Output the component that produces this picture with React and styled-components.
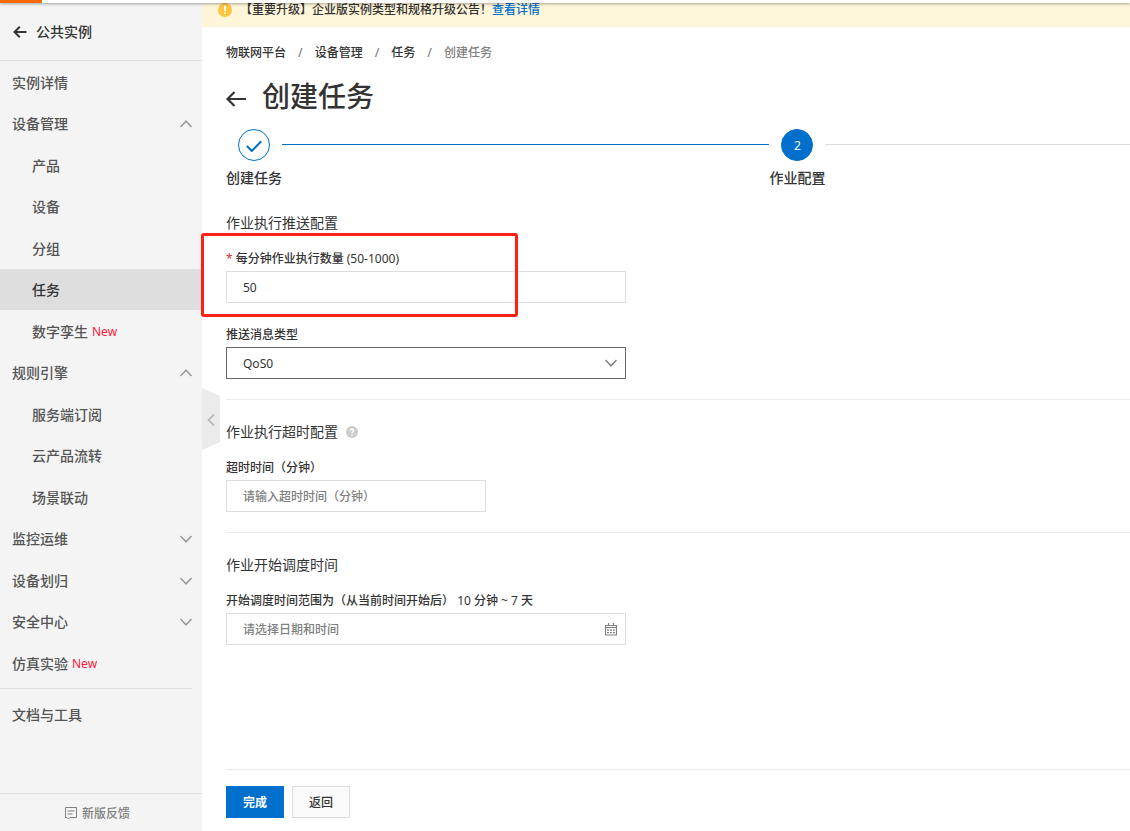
import React from 'react';
import styled, { createGlobalStyle } from 'styled-components';

const GlobalStyle = createGlobalStyle`
  *, *::before, *::after {
    box-sizing: border-box;
  }
  body {
    margin: 0;
    background: #fff;
    color: #333;
    font: 12px/20px 'Noto Sans', 'Noto Sans CJK SC', sans-serif;
    overflow-x: hidden;
  }
  button, input, select {
    font: inherit;
    color: inherit;
  }
  a {
    color: inherit;
    text-decoration: none;
  }
`;

const Page = styled.div`
  display: flex;
  flex-direction: column;
  min-height: 100vh;
`;

const TopBar = styled.header`
  position: relative;
  z-index: 2;
  height: 3px;
  background: #fff;
  box-shadow: 0 1px 3px rgba(0, 0, 0, 0.35);
`;

const TopBarMark = styled.div`
  width: 42px;
  height: 3px;
  background: #ff6a00;
`;

const Body = styled.div`
  display: flex;
  flex: 1;
`;

const Sidebar = styled.aside`
  position: relative;
  display: flex;
  flex-direction: column;
  flex: none;
  width: 202px;
  background: #f4f4f4;
  font-size: 14px;
  font-weight: 500;
  color: #555;
`;

const SidebarHead = styled.a`
  display: flex;
  align-items: center;
  gap: 9px;
  height: 58px;
  padding-left: 13px;
  border-bottom: 1px solid #dedede;
  color: #333;
`;

const Menu = styled.nav`
  display: flex;
  flex-direction: column;
`;

const MenuItem = styled.a`
  display: flex;
  align-items: center;
  height: 41px;
  padding: 1px 10px 0 ${p => (p.$child ? 32 : 12)}px;
  background: ${p => (p.$active ? '#dedede' : 'transparent')};
  color: ${p => (p.$active ? '#333' : 'inherit')};

  &:nth-child(odd) {
    height: 42px;
  }

  svg {
    margin-left: auto;
  }
`;

const NewTag = styled.span`
  margin-left: 4px;
  font-size: 12px;
  font-weight: 400;
  color: #ff1a3d;
`;

const MenuDivider = styled.hr`
  width: 192px;
  margin: 4px 0;
  border: 0;
  border-top: 1px solid #dedede;
`;

const Feedback = styled.a`
  display: flex;
  align-items: center;
  justify-content: center;
  gap: 5px;
  height: 38px;
  margin-top: auto;
  padding: 2px 7px 0 0;
  border-top: 1px solid #dedede;
  font-size: 12px;
  color: #808080;
`;

const Collapse = styled.button`
  position: absolute;
  top: 385px;
  left: 100%;
  z-index: 1;
  width: 18px;
  height: 62px;
  padding: 0;
  border: 0;
  background: none;
  cursor: pointer;

  svg {
    display: block;
  }
`;

const Main = styled.main`
  display: flex;
  flex-direction: column;
  flex: 1;
  min-width: 0;
`;

const Notice = styled.div`
  display: flex;
  height: 24px;
  padding-left: 16px;
  background: #fff6d9;
  font-weight: 500;
  line-height: 14px;

  svg {
    margin-right: 8px;
  }
`;

const NoticeLink = styled.a`
  color: #0070cc;
`;

const Content = styled.div`
  display: flex;
  flex-direction: column;
  flex: 1;
  padding: 16px 0 13px 24px;
`;

const Breadcrumb = styled.nav`
  display: flex;
  gap: 12px;
  font-weight: 500;
  color: #808080;

  a {
    color: #333;
  }
`;

const TitleRow = styled.div`
  display: flex;
  align-items: center;
  gap: 16px;
  margin: 13px 0;
`;

const BackLink = styled.a`
  display: flex;
  padding-top: 6px;
`;

const Title = styled.h1`
  margin: 0;
  font-size: 28px;
  font-weight: 500;
  line-height: 40px;
`;

const Steps = styled.div`
  display: flex;
  margin-bottom: 25px;
`;

const Step = styled.div`
  display: flex;
  flex-direction: column;
  align-items: center;
  flex: none;
  gap: 7px;
  font-size: 14px;
  font-weight: 500;
`;

const StepCircle = styled.div`
  display: flex;
  align-items: center;
  justify-content: center;
  width: 32px;
  height: 32px;
  padding-top: 2px;
  border: 1px solid #0070cc;
  border-radius: 50%;
  background: ${p => (p.$current ? '#0070cc' : '#fff')};
  color: #fff;
  font-size: 12px;
  font-weight: 400;
`;

const StepLine = styled.div`
  flex: ${p => p.$grow};
  height: 1px;
  margin-top: 15px;
  background: ${p => (p.$done ? '#0070cc' : '#dedede')};
`;

const Section = styled.section`
  display: flex;
  flex-direction: column;
  align-items: flex-start;
  padding-bottom: 20px;

  & + & {
    padding-top: 22px;
    border-top: 1px solid #ebebeb;
  }
`;

const SectionTitle = styled.h2`
  display: flex;
  align-items: center;
  gap: 8px;
  margin: 0 0 16px;
  font-size: 14px;
  font-weight: 400;
`;

const Field = styled.div`
  position: relative;
  width: ${p => p.$width || 400}px;
  max-width: 100%;

  & + & {
    margin-top: 22px;
  }
`;

const Label = styled.label`
  display: block;
  margin-bottom: 2px;
  font-weight: 500;
`;

const Required = styled.span`
  margin-right: 3px;
  font-weight: 400;
  color: #d93026;
`;

const Range = styled.span`
  font-weight: 400;
`;

const Control = styled.div`
  display: flex;
  align-items: center;
  height: 32px;
  padding-right: 8px;
  border: 1px solid ${p => (p.$focused ? '#666' : '#dedede')};
  background: #fff;
`;

const Input = styled.input`
  flex: 1;
  min-width: 0;
  height: 30px;
  padding: 1px 16px 0;
  border: 0;
  outline: 0;
  background: none;

  &::placeholder {
    color: #808080;
    font-weight: 500;
    opacity: 1;
  }
`;

const Select = styled.select`
  flex: 1;
  height: 30px;
  margin-right: -20px;
  padding: 2px 16px 0;
  border: 0;
  outline: 0;
  appearance: none;
  background: none;
`;

const Highlight = styled.div`
  position: absolute;
  top: -16px;
  left: -25px;
  width: 317px;
  height: 84px;
  border: 3px solid #ff2015;
  border-radius: 3px;
  pointer-events: none;
`;

const Actions = styled.div`
  display: flex;
  gap: 8px;
  margin-top: auto;
  padding-top: 16px;
  border-top: 1px solid #ebebeb;
`;

const Button = styled.button`
  height: 32px;
  padding: 2px 16px 0;
  border: 1px solid ${p => (p.$primary ? '#0070cc' : '#dedede')};
  background: ${p => (p.$primary ? '#0070cc' : '#fafafa')};
  color: ${p => (p.$primary ? '#fff' : '#333')};
  font-weight: ${p => (p.$primary ? 700 : 500)};
  cursor: pointer;
`;

const Chevron = ({ up, color = '#999' }) => (
  <svg width="12" height="8" viewBox="0 0 12 8" fill="none" stroke={color} strokeWidth="1.5">
    <path d={up ? 'M0.5 7 6 1.2 11.5 7' : 'M0.5 1 6 6.8 11.5 1'} />
  </svg>
);

const SmallArrow = () => (
  <svg width="14" height="12" viewBox="0 0 14 12" fill="none" stroke="#333" strokeWidth="2">
    <path d="M13.5 6H1.5M6.8 0.8 1.5 6l5.3 5.2" />
  </svg>
);

const BigArrow = () => (
  <svg width="20" height="16" viewBox="0 0 20 16" fill="none" stroke="#333" strokeWidth="2.2">
    <path d="M20 8H1.5M8.5 1 1.5 8l7 7" />
  </svg>
);

const WarningIcon = () => (
  <svg width="14" height="14" viewBox="0 0 14 14">
    <circle cx="7" cy="7" r="7" fill="#ffc440" />
    <path d="M6 2.8h2L7.7 8H6.3z" fill="#fff" />
    <circle cx="7" cy="10" r="1" fill="#fff" />
  </svg>
);

const CheckIcon = () => (
  <svg width="16" height="12" viewBox="0 0 16 12" fill="none" stroke="#0070cc" strokeWidth="2">
    <path d="M0.8 6 5.8 11 15.2 1.2" />
  </svg>
);

const HelpIcon = () => (
  <svg width="12" height="12" viewBox="0 0 12 12" fill="none">
    <circle cx="6" cy="6" r="6" fill="#ccc" />
    <path d="M4.3 4.8C4.3 3.6 5 3 6 3s1.7.6 1.7 1.5C7.7 5.6 6 5.7 6 7.2" stroke="#fff" strokeWidth="1.4" />
    <circle cx="6" cy="9" r="0.8" fill="#fff" />
  </svg>
);

const CalendarIcon = () => (
  <svg width="12" height="13" viewBox="0 0 12 13" fill="none" stroke="#808080">
    <path d="M0.5 2.5h11v9.5H0.5zM0.5 4.5h11M3.5 0v2M8.5 0v2" strokeWidth="1.2" />
    <path d="M2 7.2h8M2 9.7h8" strokeWidth="1.2" strokeDasharray="2 1" />
  </svg>
);

const FeedbackIcon = () => (
  <svg width="12" height="13" viewBox="0 0 12 13" fill="none" stroke="#808080">
    <path d="M0.5 0.5h11v10H5l-1.5 1.5L2 10.5H0.5zM2.5 4h7M2.5 7h5" />
  </svg>
);

const menu = [
  { name: '实例详情' },
  { name: '设备管理', open: true },
  { name: '产品', child: true },
  { name: '设备', child: true },
  { name: '分组', child: true },
  { name: '任务', child: true, active: true },
  { name: '数字孪生', child: true, isNew: true },
  { name: '规则引擎', open: true },
  { name: '服务端订阅', child: true },
  { name: '云产品流转', child: true },
  { name: '场景联动', child: true },
  { name: '监控运维', open: false },
  { name: '设备划归', open: false },
  { name: '安全中心', open: false },
  { name: '仿真实验', isNew: true },
];

export default () => (
  <Page>
    <GlobalStyle />
    <TopBar>
      <TopBarMark />
    </TopBar>
    <Body>
      <Sidebar>
        <SidebarHead href="#">
          <SmallArrow />
          公共实例
        </SidebarHead>
        <Menu>
          {menu.map(({ name, child, active, open, isNew }) => (
            <MenuItem key={name} href="#" $child={child} $active={active}>
              {name}
              {isNew && <NewTag>New</NewTag>}
              {open !== undefined && <Chevron up={open} />}
            </MenuItem>
          ))}
          <MenuDivider />
          <MenuItem href="#">文档与工具</MenuItem>
        </Menu>
        <Feedback href="#">
          <FeedbackIcon />
          新版反馈
        </Feedback>
        <Collapse type="button">
          <svg width="18" height="62" viewBox="0 0 18 62" fill="none">
            <path d="M0 0 18 8v46L0 62z" fill="#ebebeb" />
            <path d="M12 26.5 6.5 32l5.5 5.5" stroke="#bbb" strokeWidth="1.8" />
          </svg>
        </Collapse>
      </Sidebar>
      <Main>
        <Notice>
          <WarningIcon />
          【重要升级】企业版实例类型和规格升级公告！
          <NoticeLink href="#">查看详情</NoticeLink>
        </Notice>
        <Content>
          <Breadcrumb>
            <a href="#">物联网平台</a>
            <span>/</span>
            <a href="#">设备管理</a>
            <span>/</span>
            <a href="#">任务</a>
            <span>/</span>
            <span>创建任务</span>
          </Breadcrumb>
          <TitleRow>
            <BackLink href="#">
              <BigArrow />
            </BackLink>
            <Title>创建任务</Title>
          </TitleRow>
          <Steps>
            <Step>
              <StepCircle>
                <CheckIcon />
              </StepCircle>
              创建任务
            </Step>
            <StepLine $grow={8} $done />
            <Step>
              <StepCircle $current>2</StepCircle>
              作业配置
            </Step>
            <StepLine $grow={5} />
          </Steps>
          <Section>
            <SectionTitle>作业执行推送配置</SectionTitle>
            <Field>
              <Label htmlFor="rate">
                <Required>*</Required>
                每分钟作业执行数量 <Range>(50-1000)</Range>
              </Label>
              <Control>
                <Input id="rate" defaultValue="50" />
              </Control>
              <Highlight />
            </Field>
            <Field>
              <Label htmlFor="qos">推送消息类型</Label>
              <Control $focused>
                <Select id="qos" defaultValue="QoS0">
                  <option>QoS0</option>
                </Select>
                <Chevron color="#808080" />
              </Control>
            </Field>
          </Section>
          <Section>
            <SectionTitle>
              作业执行超时配置
              <HelpIcon />
            </SectionTitle>
            <Field $width={260}>
              <Label htmlFor="timeout">超时时间（分钟）</Label>
              <Control>
                <Input id="timeout" placeholder="请输入超时时间（分钟）" />
              </Control>
            </Field>
          </Section>
          <Section>
            <SectionTitle>作业开始调度时间</SectionTitle>
            <Field>
              <Label htmlFor="start">
                开始调度时间范围为（从当前时间开始后） <Range>10</Range> 分钟 <Range>~ 7</Range> 天
              </Label>
              <Control>
                <Input id="start" placeholder="请选择日期和时间" />
                <CalendarIcon />
              </Control>
            </Field>
          </Section>
          <Actions>
            <Button type="button" $primary>完成</Button>
            <Button type="button">返回</Button>
          </Actions>
        </Content>
      </Main>
    </Body>
  </Page>
);
